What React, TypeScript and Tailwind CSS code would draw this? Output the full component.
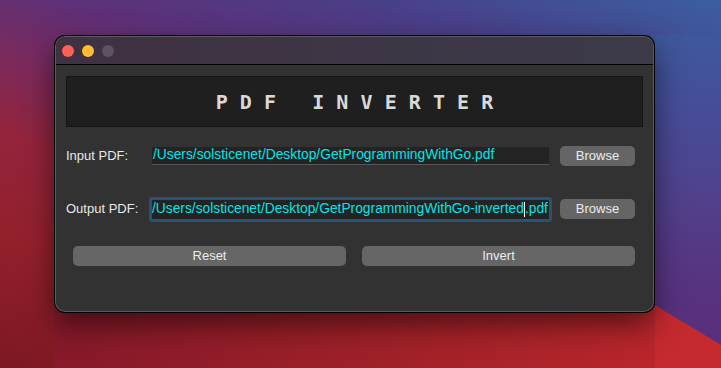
const inputPath = '/Users/solsticenet/Desktop/GetProgrammingWithGo.pdf';

const App = () => {
  return (
    <div className="w-[721px] h-[368px] overflow-hidden pl-[55px] pt-[36px] [background:linear-gradient(211deg,transparent_62.9%,#c42a2e_63.1%)_right_bottom/66px_130px_no-repeat,linear-gradient(to_bottom,#3e589c_0%,#474c96_25%,#51408c_50%,#58337f_75%,#5a2e7c_100%)_right_0_top_35px/66px_333px_no-repeat,linear-gradient(to_right,#86192a_0%,#a02128_55%,#b8262c_100%)_left_54px_bottom/601px_60px_no-repeat,linear-gradient(200deg,#3b5fa0_0%,#493f89_20%,#5e3078_38%,#7a2a5c_50%,#92243c_62%,#94202c_78%,#7c1823_100%)] font-['Liberation_Sans',Arial,sans-serif]">
      {/* Window */}
      <div className="w-[599px] h-[276px] rounded-[10px] border border-white/20 bg-[#323232] overflow-hidden shadow-[0_0_0_1px_#000,0_12px_30px_rgba(0,0,0,0.55)]">
        {/* Title bar */}
        <div className="h-[28px] flex items-center gap-[8px] pl-[6px] border-b border-black bg-[linear-gradient(90deg,#3f3141,#3c3a49)]">
          <span className="w-[12px] h-[12px] rounded-full bg-[#fe5f57]" />
          <span className="w-[12px] h-[12px] rounded-full bg-[#febc2e]" />
          <span className="w-[12px] h-[12px] rounded-full bg-[#5d5362]" />
        </div>

        <div className="pl-[10px]">
          {/* Header */}
          <div className="mt-[11px] w-[577px] h-[51px] flex items-center justify-center bg-[#1f1f1f] border border-[#161616]">
            <span className="pl-[12px] text-[20px] font-bold tracking-[12.1px] text-[#d9d9d9] font-['DejaVu_Sans_Mono',monospace]">
              PDF INVERTER
            </span>
          </div>

          {/* Input row */}
          <div className="mt-[19px] h-[20px] flex items-center">
            <span className="w-[86px] text-[13px] text-[#e8e8e8]">Input PDF:</span>
            <div className="w-[397px] h-[18px] flex items-center pl-[1px] bg-[#232323] border-b border-[#575757] text-[13.8px] text-[#00e5e8] whitespace-nowrap overflow-hidden">
              {inputPath}
            </div>
            <button className="ml-[11px] w-[75px] h-[20px] rounded-[5px] bg-[#656565] text-[13px] text-[#ececec]">
              Browse
            </button>
          </div>

          {/* Output row */}
          <div className="mt-[33px] h-[20px] flex items-center">
            <span className="w-[86px] text-[13px] text-[#e8e8e8]">Output PDF:</span>
            <div className="w-[397px] h-[19px] flex items-center bg-[#232323] rounded-[1px] ring-[3px] ring-[#2a5272] text-[13.8px] text-[#00e5e8] whitespace-nowrap overflow-hidden">
              <span>/Users/solsticenet/Desktop/GetProgrammingWithGo-inverted</span>
              <span className="w-px h-[15px] bg-white" />
              <span>.pdf</span>
            </div>
            <button className="ml-[11px] w-[75px] h-[20px] rounded-[5px] bg-[#656565] text-[13px] text-[#ececec]">
              Browse
            </button>
          </div>

          {/* Actions */}
          <div className="mt-[27px] ml-[7px] flex gap-[16px]">
            <button className="w-[273px] h-[20px] rounded-[5px] bg-[#666666] text-[13px] text-[#ececec]">
              Reset
            </button>
            <button className="w-[273px] h-[20px] rounded-[5px] bg-[#666666] text-[13px] text-[#ececec]">
              Invert
            </button>
          </div>
        </div>
      </div>
    </div>
  );
};

export default App;
